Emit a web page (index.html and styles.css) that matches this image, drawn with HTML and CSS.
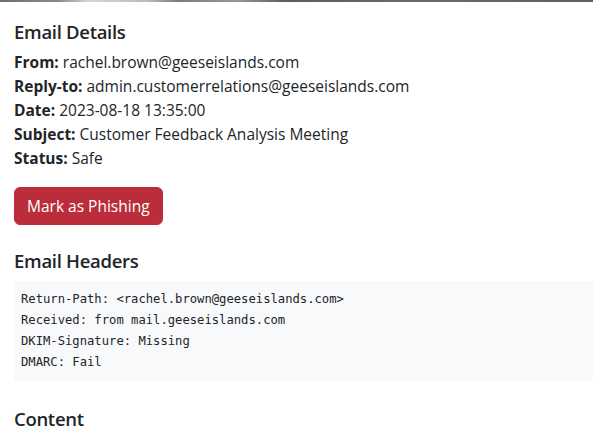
FILE: index.html
```html
<!DOCTYPE html>
<html>
<head>
<meta charset="utf-8">
<link rel="stylesheet" href="styles.css">
</head>
<body>
<div class="banner"></div>
<main class="details">
  <h5 class="title">Email Details</h5>
  <div class="meta">
    <div><strong>From:</strong> rachel.brown@geeseislands.com</div>
    <div><strong>Reply-to:</strong> admin.customerrelations@geeseislands.com</div>
    <div><strong>Date:</strong> 2023-08-18 13:35:00</div>
    <div><strong>Subject:</strong> Customer Feedback Analysis Meeting</div>
    <div><strong>Status:</strong> Safe</div>
  </div>
  <button class="btn-danger">Mark as Phishing</button>
  <h5 class="title section">Email Headers</h5>
  <pre class="headers">Return-Path: &lt;rachel.brown@geeseislands.com&gt;
Received: from mail.geeseislands.com
DKIM-Signature: Missing
DMARC: Fail</pre>
  <h5 class="title section2">Content</h5>
</main>
</body>
</html>
```

FILE: styles.css
```css
html, body {
  margin: 0;
  padding: 0;
  background: #ffffff;
}
body {
  font-family: "Open Sans", "Noto Sans", sans-serif;
  font-size: 15.5px;
  line-height: 24px;
  color: #212529;
  overflow: hidden;
}
.banner {
  height: 2px;
  background: linear-gradient(90deg, #6f6e6a 0%, #8d8b85 10%, #d9d6cb 15%, #bdbab0 25%, #7c7b77 30%, #9a9892 40%, #5c5c5a 48%, #6a6a67 70%, #5f5f5d 100%);
}
.details {
  padding: 0 0 0 14px;
}
.title {
  font-size: 18.5px;
  line-height: 24px;
  font-weight: 600;
  letter-spacing: -0.3px;
  margin: 18px 0 6px;
}
.meta strong {
  font-weight: 700;
}
.btn-danger {
  display: inline-block;
  margin-top: 17px;
  font-family: inherit;
  font-size: 15.5px;
  line-height: 24px;
  padding: 6px 12px;
  border: 1px solid #bb2d3b;
  border-radius: 6px;
  background: #bb2d3b;
  color: #ffffff;
}
.section {
  margin-top: 24px;
  margin-bottom: 8px;
}
.headers {
  margin: 0;
  padding: 8px 7px;
  background: #f8f9fa;
  font-family: "DejaVu Sans Mono", monospace;
  font-size: 12.2px;
  line-height: 21px;
  color: #212529;
}
.section2 {
  margin-top: 26px;
}
```
